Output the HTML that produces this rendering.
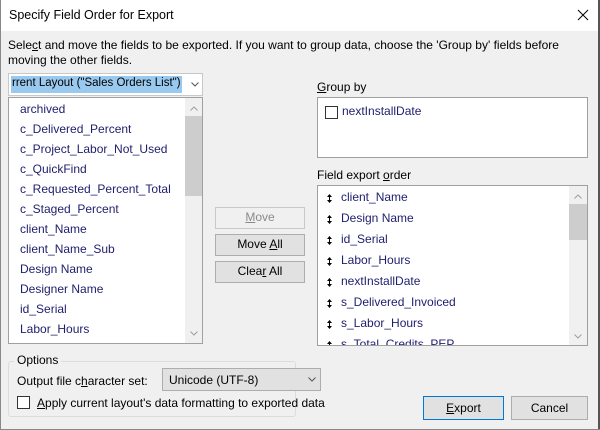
<!DOCTYPE html>
<html><head><style>
*{margin:0;padding:0;box-sizing:border-box}
body{width:600px;height:430px;background:#f0f0f0;font-family:"Liberation Sans",sans-serif;font-size:12px;color:#000;position:relative;overflow:hidden}
.a{position:absolute;white-space:nowrap}
.box{position:absolute;background:#fff;border:1px solid #a0a0a0;overflow:hidden}
.it{position:absolute;left:11px;color:#1e1e6e;font-size:12px}
.it2{position:absolute;left:23px;color:#1e1e6e;font-size:12px}
.bul{position:absolute;left:9px;width:5px;height:9px}
.sb{position:absolute;background:#f0f0f0}
.th{position:absolute;background:#cdcdcd}
.btn{position:absolute;background:#e1e1e1;border:1px solid #adadad;text-align:center;line-height:19px}
u{text-decoration:underline}
</style></head><body>
<div class="a" style="left:0;top:0;width:600px;height:31px;background:#fff"></div>
<div class="a" style="left:598px;top:0;width:2px;height:430px;background:#555"></div>
<div class="a" style="left:0;top:0;width:1px;height:430px;background:#888"></div>
<div class="a" style="left:0;top:429px;width:600px;height:1px;background:#888"></div>
<div class="a" style="left:9px;top:8px;font-size:12.5px">Specify Field Order for Export</div>
<svg class="a" style="left:577px;top:9px" width="12" height="12"><path d="M1 1L11 11M11 1L1 11" stroke="#000" stroke-width="1"/></svg>
<div class="a" style="left:8px;top:38px">Sele<u>c</u>t and move the fields to be exported. If you want to group data, choose the 'Group by' fields before</div>
<div class="a" style="left:8px;top:53px">moving the other fields.</div>

<div class="box" style="left:8px;top:73px;width:195px;height:23px;border-color:#c8c8c8">
<div class="a" style="left:2px;top:2px;width:171px;height:17px;background:#99c9ef"></div>
<div class="a" style="left:3px;top:3px;font-size:11.5px">rrent Layout ("Sales Orders List")</div>
<div class="a" style="left:176px;top:1px;width:17px;height:19px;background:#fff"></div>
<svg class="a" style="left:182px;top:8px" width="8" height="5"><path d="M0.5 0.5L4 4L7.5 0.5" stroke="#555" fill="none"/></svg>
</div>

<div class="box" style="left:8px;top:97px;width:195px;height:247px">
<div class="it" style="top:4px">archived</div>
<div class="it" style="top:24px">c_Delivered_Percent</div>
<div class="it" style="top:44px">c_Project_Labor_Not_Used</div>
<div class="it" style="top:64px">c_QuickFind</div>
<div class="it" style="top:84px">c_Requested_Percent_Total</div>
<div class="it" style="top:104px">c_Staged_Percent</div>
<div class="it" style="top:124px">client_Name</div>
<div class="it" style="top:144px">client_Name_Sub</div>
<div class="it" style="top:164px">Design Name</div>
<div class="it" style="top:184px">Designer Name</div>
<div class="it" style="top:204px">id_Serial</div>
<div class="it" style="top:224px">Labor_Hours</div>
<div class="sb" style="left:176px;top:0;width:17px;height:245px"></div>
<div class="th" style="left:176px;top:18px;width:17px;height:80px"></div>
<svg class="a" style="left:181px;top:8px" width="8" height="5"><path d="M0.5 4.5L4 1L7.5 4.5" stroke="#a0a0a0" fill="none"/></svg>
<svg class="a" style="left:181px;top:233px" width="8" height="5"><path d="M0.5 0.5L4 4L7.5 0.5" stroke="#a0a0a0" fill="none"/></svg>
</div>

<div class="btn" style="left:215px;top:207px;width:90px;height:22px;background:#f0f0f0;border-color:#c8c8c8;color:#8a8a8a"><u>M</u>ove</div>
<div class="btn" style="left:215px;top:234px;width:90px;height:22px">Move <u>A</u>ll</div>
<div class="btn" style="left:215px;top:261px;width:90px;height:22px">Clea<u>r</u> All</div>

<div class="a" style="left:317px;top:80px"><u>G</u>roup by</div>
<div class="box" style="left:317px;top:97px;width:271px;height:61px">
<div class="a" style="left:7px;top:8px;width:13px;height:13px;border:1px solid #333;background:#fff"></div>
<div class="a" style="left:24px;top:6px;color:#1e1e6e">nextInstallDate</div>
</div>

<div class="a" style="left:317px;top:168px">Field export <u>o</u>rder</div>
<div class="box" style="left:317px;top:185px;width:271px;height:161px">
<svg class="bul" style="top:8px"><path d="M0 3L2.5 0L5 3ZM0 6L2.5 9L5 6ZM2 3H3V6H2Z" fill="#000"/></svg><div class="it2" style="top:4px">client_Name</div>
<svg class="bul" style="top:29px"><path d="M0 3L2.5 0L5 3ZM0 6L2.5 9L5 6ZM2 3H3V6H2Z" fill="#000"/></svg><div class="it2" style="top:25px">Design Name</div>
<svg class="bul" style="top:50px"><path d="M0 3L2.5 0L5 3ZM0 6L2.5 9L5 6ZM2 3H3V6H2Z" fill="#000"/></svg><div class="it2" style="top:46px">id_Serial</div>
<svg class="bul" style="top:71px"><path d="M0 3L2.5 0L5 3ZM0 6L2.5 9L5 6ZM2 3H3V6H2Z" fill="#000"/></svg><div class="it2" style="top:67px">Labor_Hours</div>
<svg class="bul" style="top:92px"><path d="M0 3L2.5 0L5 3ZM0 6L2.5 9L5 6ZM2 3H3V6H2Z" fill="#000"/></svg><div class="it2" style="top:88px">nextInstallDate</div>
<svg class="bul" style="top:113px"><path d="M0 3L2.5 0L5 3ZM0 6L2.5 9L5 6ZM2 3H3V6H2Z" fill="#000"/></svg><div class="it2" style="top:109px">s_Delivered_Invoiced</div>
<svg class="bul" style="top:134px"><path d="M0 3L2.5 0L5 3ZM0 6L2.5 9L5 6ZM2 3H3V6H2Z" fill="#000"/></svg><div class="it2" style="top:130px">s_Labor_Hours</div>
<svg class="bul" style="top:155px"><path d="M0 3L2.5 0L5 3ZM0 6L2.5 9L5 6ZM2 3H3V6H2Z" fill="#000"/></svg><div class="it2" style="top:151px">s_Total_Credits_PEP</div>
<div class="sb" style="left:251px;top:0;width:18px;height:159px"></div>
<div class="th" style="left:251px;top:18px;width:18px;height:36px"></div>
<svg class="a" style="left:256px;top:8px" width="8" height="5"><path d="M0.5 4.5L4 1L7.5 4.5" stroke="#a0a0a0" fill="none"/></svg>
<svg class="a" style="left:256px;top:148px" width="8" height="5"><path d="M0.5 0.5L4 4L7.5 0.5" stroke="#a0a0a0" fill="none"/></svg>
</div>

<div class="a" style="left:8px;top:361px;width:288px;height:56px;border:1px solid #dcdcdc;border-radius:3px"></div>
<div class="a" style="left:14px;top:353px;padding:0 3px;background:#f0f0f0">Options</div>
<div class="a" style="left:17px;top:374px">Output file c<u>h</u>aracter set:</div>
<div class="a" style="left:162px;top:368px;width:159px;height:23px;background:#e1e1e1;border:1px solid #adadad">
<div class="a" style="left:6px;top:4px">Unicode (UTF-8)</div>
<svg class="a" style="left:145px;top:8px" width="8" height="5"><path d="M0.5 0.5L4 4L7.5 0.5" stroke="#555" fill="none"/></svg>
</div>
<div class="a" style="left:17px;top:396px;width:13px;height:13px;border:1px solid #333;background:#fff"></div>
<div class="a" style="left:37px;top:396px"><u>A</u>pply current layout's data formatting to exported data</div>

<div class="btn" style="left:423px;top:396px;width:81px;height:24px;border:1px solid #0078d7;line-height:22px"><u>E</u>xport</div>
<div class="btn" style="left:511px;top:396px;width:77px;height:24px;line-height:22px">Cancel</div>
</body></html>
